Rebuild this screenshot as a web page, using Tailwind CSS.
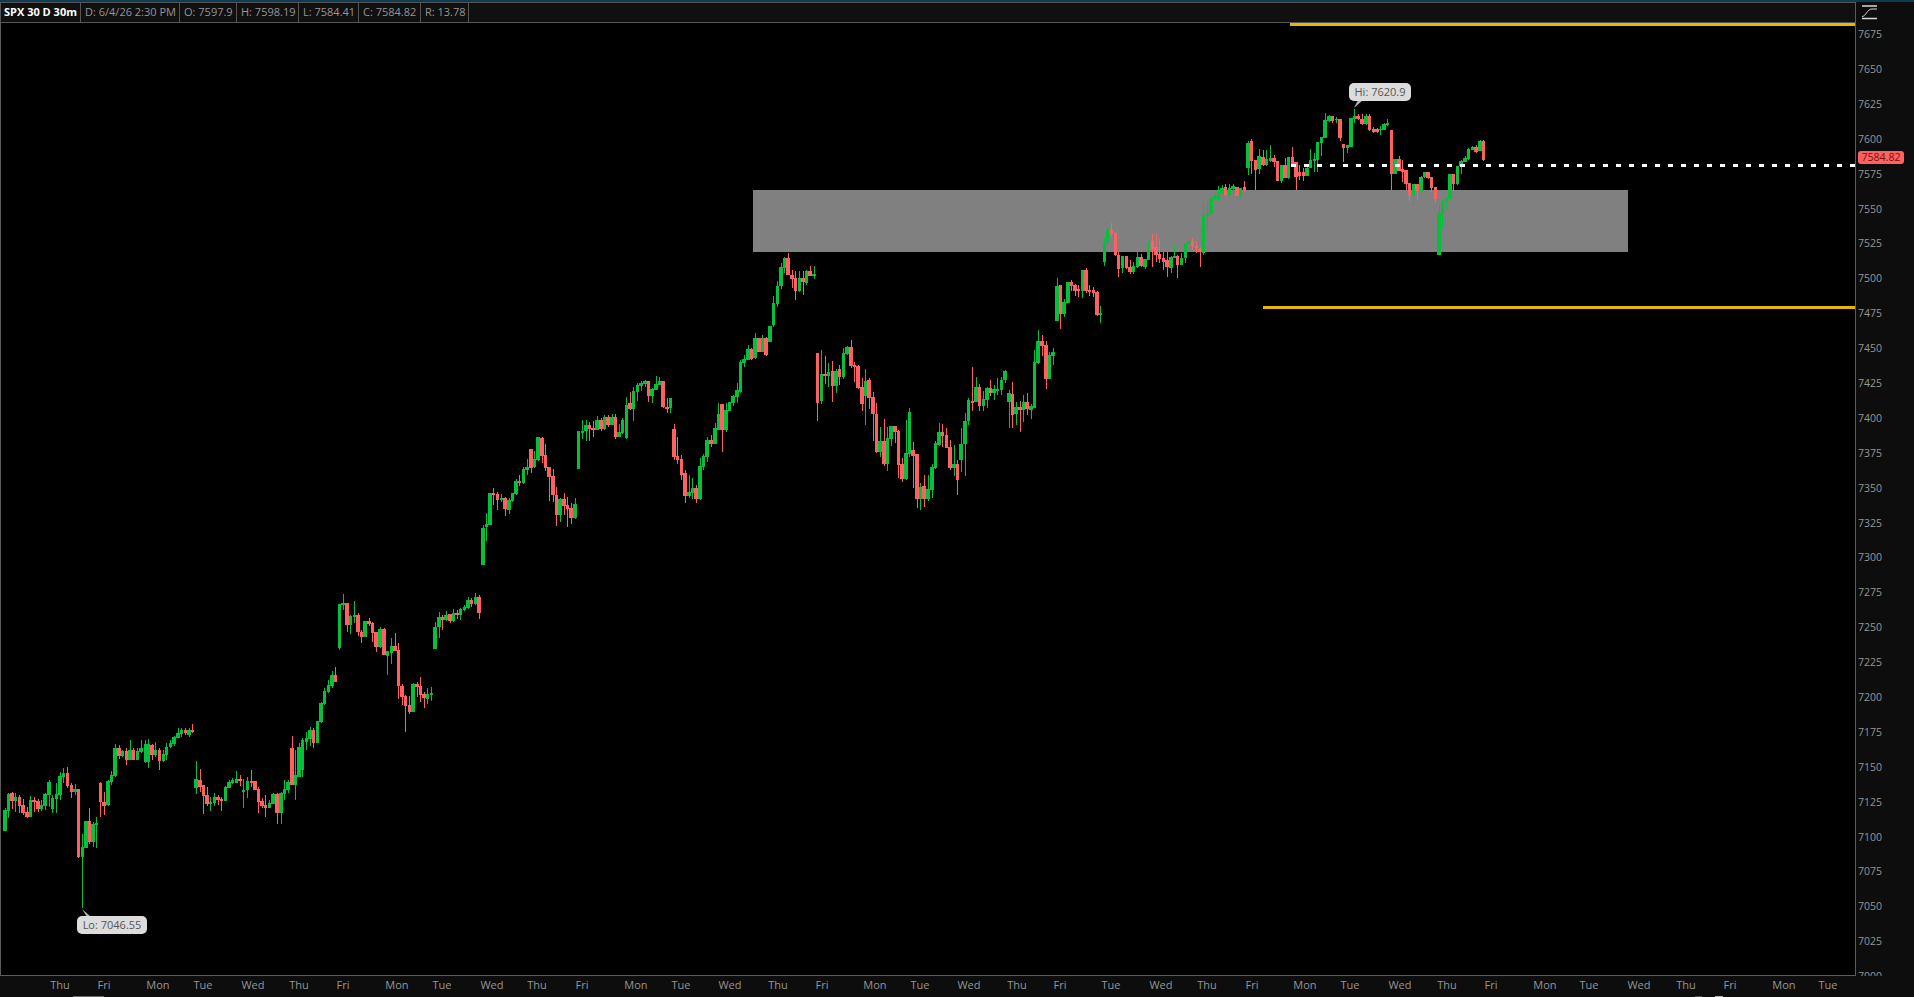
<!DOCTYPE html>
<html lang="en">
<head>
    <meta charset="UTF-8">
    <title>SPX 30 D 30m</title>
    <script src="https://cdn.jsdelivr.net/npm/@tailwindcss/browser@4"></script>
</head>
<body class="bg-black overflow-hidden">
    <div class="w-[1914px] h-[997px] flex flex-col font-['Open_Sans',sans-serif] text-[10.5px] text-[#969696] relative">
        <!-- top stripe -->
        <div class="h-[2px] bg-[#0e3a52]"></div>

        <div class="h-[974px] flex">
            <!-- left: header + chart -->
            <div class="w-[1855px] flex flex-col">
                <div class="h-[21px] flex items-center bg-[#101010] border-t border-b border-[#555555] border-l text-[11px]">
                    <div class="w-[80px] h-full flex items-center pl-[3px] border-r border-[#555555] text-white font-bold">SPX 30 D 30m</div>
                    <div class="w-[99px] h-full flex items-center pl-[4px] border-r border-[#555555]">D: 6/4/26 2:30 PM</div>
                    <div class="w-[57px] h-full flex items-center pl-[4px] border-r border-[#555555]">O: 7597.9</div>
                    <div class="w-[62px] h-full flex items-center pl-[4px] border-r border-[#555555]">H: 7598.19</div>
                    <div class="w-[60px] h-full flex items-center pl-[4px] border-r border-[#555555]">L: 7584.41</div>
                    <div class="w-[62px] h-full flex items-center pl-[4px] border-r border-[#555555]">C: 7584.82</div>
                    <div class="w-[48px] h-full flex items-center pl-[4px] border-r border-[#555555]">R: 13.78</div>
                </div>

                <!-- chart -->
                <div class="h-[953px] relative border-l border-b border-[#5a5a5a] bg-black">
                    <svg id="chart" class="block w-[1854px] h-[952px]" viewBox="1 23 1854 952" shape-rendering="crispEdges">
                        <rect x="753" y="190" width="875" height="62" fill="#808080"></rect>
                        <rect x="1290" y="23" width="565" height="3" fill="#e6b800"></rect>
                        <rect x="1263" y="306" width="592" height="3" fill="#e6b800"></rect>
                        <g id="candles"></g>
                        <line x1="1291" y1="165.5" x2="1855" y2="165.5" stroke="#ffffff" stroke-width="3" stroke-dasharray="5 8"></line>
                        <polygon points="82,909 87,917 90,916" fill="#b5b5b5" shape-rendering="auto"></polygon>
                        <polygon points="1354,108 1358,100 1363,100" fill="#b5b5b5" shape-rendering="auto"></polygon>
                    </svg>
                    <div class="absolute left-[76px] top-[893px] w-[70px] h-[18px] rounded-[5px] bg-[#dcdcdc] text-[#555555] text-[11px] flex items-center justify-center">Lo: 7046.55</div>
                    <div class="absolute left-[1348px] top-[60px] w-[62px] h-[18px] rounded-[5px] bg-[#dcdcdc] text-[#555555] text-[11px] flex items-center justify-center">Hi: 7620.9</div>
                </div>
            </div>

            <!-- price axis -->
            <div class="w-[59px] relative overflow-hidden bg-[#0d0d0d] border-l border-[#5a5a5a] pt-[15.5px] pl-[2px]">
                <div class="h-[34.9px] flex items-center">7675</div>
                <div class="h-[34.9px] flex items-center">7650</div>
                <div class="h-[34.9px] flex items-center">7625</div>
                <div class="h-[34.9px] flex items-center">7600</div>
                <div class="h-[34.9px] flex items-center">7575</div>
                <div class="h-[34.9px] flex items-center">7550</div>
                <div class="h-[34.9px] flex items-center">7525</div>
                <div class="h-[34.9px] flex items-center">7500</div>
                <div class="h-[34.9px] flex items-center">7475</div>
                <div class="h-[34.9px] flex items-center">7450</div>
                <div class="h-[34.9px] flex items-center">7425</div>
                <div class="h-[34.9px] flex items-center">7400</div>
                <div class="h-[34.9px] flex items-center">7375</div>
                <div class="h-[34.9px] flex items-center">7350</div>
                <div class="h-[34.9px] flex items-center">7325</div>
                <div class="h-[34.9px] flex items-center">7300</div>
                <div class="h-[34.9px] flex items-center">7275</div>
                <div class="h-[34.9px] flex items-center">7250</div>
                <div class="h-[34.9px] flex items-center">7225</div>
                <div class="h-[34.9px] flex items-center">7200</div>
                <div class="h-[34.9px] flex items-center">7175</div>
                <div class="h-[34.9px] flex items-center">7150</div>
                <div class="h-[34.9px] flex items-center">7125</div>
                <div class="h-[34.9px] flex items-center">7100</div>
                <div class="h-[34.9px] flex items-center">7075</div>
                <div class="h-[34.9px] flex items-center">7050</div>
                <div class="h-[34.9px] flex items-center">7025</div>
                <div class="h-[34.9px] flex items-center">7000</div>

                <!-- scale icon -->
                <svg class="absolute left-[5px] top-[2px]" width="17" height="17" viewBox="0 0 17 17" fill="none" stroke="#d8d8d8">
                    <path d="M1 2h15M1 14.5h15" stroke-width="1.6"></path>
                    <path d="M1 12.5C5 12.5 6 5 11 5h5" stroke-width="1"></path>
                </svg>
                <!-- last price tag -->
                <div class="absolute left-[2px] top-[149px] w-[46px] h-[13px] rounded-[3px] bg-[#ff6060] text-[#6f1414] flex items-center justify-center">7584.82</div>
            </div>
        </div>

        <!-- time axis -->
        <div class="flex-1 flex items-center bg-[#0d0d0d] text-[11px] pb-[3px]">
            <div class="w-10 text-center ml-[40px]">Thu</div>
            <div class="w-10 text-center ml-[4px]">Fri</div>
            <div class="w-10 text-center ml-[14px]">Mon</div>
            <div class="w-10 text-center ml-[5px]">Tue</div>
            <div class="w-10 text-center ml-[10px]">Wed</div>
            <div class="w-10 text-center ml-[6px]">Thu</div>
            <div class="w-10 text-center ml-[4px]">Fri</div>
            <div class="w-10 text-center ml-[14px]">Mon</div>
            <div class="w-10 text-center ml-[5px]">Tue</div>
            <div class="w-10 text-center ml-[10px]">Wed</div>
            <div class="w-10 text-center ml-[5px]">Thu</div>
            <div class="w-10 text-center ml-[5px]">Fri</div>
            <div class="w-10 text-center ml-[14px]">Mon</div>
            <div class="w-10 text-center ml-[5px]">Tue</div>
            <div class="w-10 text-center ml-[9px]">Wed</div>
            <div class="w-10 text-center ml-[8px]">Thu</div>
            <div class="w-10 text-center ml-[4px]">Fri</div>
            <div class="w-10 text-center ml-[13px]">Mon</div>
            <div class="w-10 text-center ml-[5px]">Tue</div>
            <div class="w-10 text-center ml-[9px]">Wed</div>
            <div class="w-10 text-center ml-[8px]">Thu</div>
            <div class="w-10 text-center ml-[3px]">Fri</div>
            <div class="w-10 text-center ml-[11px]">Tue</div>
            <div class="w-10 text-center ml-[10px]">Wed</div>
            <div class="w-10 text-center ml-[6px]">Thu</div>
            <div class="w-10 text-center ml-[5px]">Fri</div>
            <div class="w-10 text-center ml-[13px]">Mon</div>
            <div class="w-10 text-center ml-[5px]">Tue</div>
            <div class="w-10 text-center ml-[10px]">Wed</div>
            <div class="w-10 text-center ml-[7px]">Thu</div>
            <div class="w-10 text-center ml-[4px]">Fri</div>
            <div class="w-10 text-center ml-[14px]">Mon</div>
            <div class="w-10 text-center ml-[4px]">Tue</div>
            <div class="w-10 text-center ml-[10px]">Wed</div>
            <div class="w-10 text-center ml-[7px]">Thu</div>
            <div class="w-10 text-center ml-[4px]">Fri</div>
            <div class="w-10 text-center ml-[14px]">Mon</div>
            <div class="w-10 text-center ml-[4px]">Tue</div>
        </div>

        <!-- bits of the window below, cut off at the bottom edge -->
        <div class="absolute left-[73px] bottom-0 w-[31px] h-[1px] bg-[#6a6a6a]"></div>
        <div class="absolute left-[1695px] bottom-0 w-[7px] h-[1px] bg-[#555555]"></div>
        <div class="absolute left-[1715px] bottom-0 w-[8px] h-[1px] bg-[#bbbbbb]"></div>
    </div>

    <script>
        // candles traced from crops: [offsetX, offsetY, rows of "colour x top bottom wickTop wickBottom"], crop scale 3x
        const groups = [
            [0, 700, `g 15 330 392 325 392
g 25 282 332 280 355
r 36 279 303 276 328
g 47 291 303 280 335
r 58 291 318 285 340
r 69 316 340 296 345
r 81 336 351 320 353
g 91 300 351 287 351
r 102 300 305 290 335
r 114 304 327 297 337
g 125 316 327 300 332
g 135 282 317 280 330
g 147 245 285 240 320
g 158 295 328 285 340
g 169 283 296 250 338
g 180 228 285 215 300
g 191 219 230 205 250
r 203 219 258 202 265
r 214 255 276 250 293
g 225 267 276 252 285
r 236 267 471 267 473
g 247 441 471 402 625
g 258 363 444 363 444
r 268 363 426 325 432
g 279 372 426 365 440
g 290 370 374 350 443
r 302 249 306 246 350
r 312 306 318 276 345
g 324 243 315 240 318
g 335 225 245 212 255
g 345 144 228 132 232
r 357 144 168 135 178
g 367 153 168 150 170
r 379 152 180 145 195
g 390 151 180 120 180
r 401 151 180 145 180
g 412 153 180 145 180
g 423 144 155 120 158
g 437 132 186 120 190
g 446 132 186 118 205
r 456 135 165 132 180
g 467 150 165 125 170
r 478 150 183 145 210
g 490 162 183 150 185
g 500 141 165 130 180
g 511 129 141 120 145
g 522 111 132 108 138
g 534 99 114 85 115
g 545 90 102 85 110
r 556 90 100 85 105
g 567 90 105 85 110
r 578 90 95 72 100
g 588 237 264 183 282
r 600 240 262 207 275
r 611 255 288 255 342
r 621 285 312 262 317
g 632 306 312 290 332
g 643 292 310 280 318
r 654 291 300 285 315
r 665 296 302 290 332
g 676 261 303 258 303
g 687 246 264 240 265
g 698 240 250 235 252
g 709 237 248 213 250
r 720 237 243 225 258
g 731 270 276 237 324
g 742 243 270 232 295
r 754 243 250 210 262
r 765 243 270 243 270
r 776 267 306 260 340
r 786 303 318 295 325
r 797 315 323 285 350
g 809 309 323 300 325
g 819 282 312 278 312
r 831 282 339 280 372
g 843 279 339 275 372
g 854 267 282 240 300
g 864 246 270 240 280
r 876 144 255 108 255
g 887 225 255 150 300`],
            [280, 570, `g 57 531 621 520 621
g 68 510 600 503 620
g 79 505 515 487 540
g 90 480 507 472 528
r 101 480 519 475 534
g 112 454 519 454 519
g 123 400 456 395 458
g 134 363 402 354 405
g 145 345 366 330 369
g 156 315 348 303 354
r 167 315 336 291 336
g 178 102 234 102 240
g 189 99 105 72 120
r 201 99 165 99 186
g 211 138 165 135 192
g 223 135 141 93 160
r 234 135 186 129 198
r 244 186 201 180 219
g 255 153 201 153 201
r 267 153 162 144 168
r 278 159 189 156 216
r 288 186 231 186 246
g 300 177 231 171 234
r 312 177 255 174 255
g 322 243 258 243 315
g 334 228 249 204 282
r 345 228 243 189 243
r 356 240 348 219 387
r 366 348 381 342 405
r 377 378 408 375 486
r 388 405 426 378 432
g 399 342 426 339 426
r 411 342 351 336 381
r 421 348 375 321 396
r 432 372 384 366 414
g 443 372 387 354 402
g 454 369 375 351 393
g 465 171 237 156 237
g 477 141 171 126 204
r 487 141 150 135 180
g 498 135 150 123 153
r 510 132 153 132 159
g 520 129 153 117 156
r 531 129 135 120 147
g 542 117 135 115 150
g 553 111 120 105 123
g 564 90 114 81 117
r 575 90 102 84 111
g 587 81 102 69 105
r 597 81 129 75 147`],
            [470, 360, `g 39 504 615 495 615
g 50 492 501 459 543
g 60 399 495 399 495
r 71 399 405 384 435
r 83 402 420 396 450
g 94 414 420 402 426
r 105 414 447 411 468
g 117 420 450 414 462
g 128 399 423 399 426
g 138 363 402 357 405
r 149 363 369 345 378
g 160 327 369 321 372
g 171 321 330 297 345
r 183 267 324 267 339
g 193 297 321 273 324
g 204 231 300 231 303
r 216 234 288 231 309
r 226 285 324 252 333
r 237 321 351 321 423
r 249 348 405 327 426
r 259 405 465 381 498
g 270 417 465 414 486
r 282 417 438 399 465
r 292 435 447 411 501
r 303 444 474 429 492
g 315 432 474 414 477
g 326 213 327 213 327
g 337 213 219 180 237
g 348 195 213 180 243
r 358 195 207 186 243
r 369 204 210 183 231
g 381 180 210 168 210
r 393 180 207 174 213
g 404 171 207 165 210
r 414 171 195 165 201
g 426 171 195 162 195
r 437 171 231 162 237
g 447 216 231 192 231
g 458 180 219 174 222
g 470 135 234 111 237
r 480 129 147 96 150
g 491 94 147 81 183
g 502 75 96 69 123
g 513 69 78 63 93
g 525 63 72 60 81
r 536 63 108 63 126
g 546 87 108 84 129
g 558 72 90 48 90
g 569 63 75 51 75
r 579 63 141 63 144
r 591 141 147 114 159
g 602 114 144 114 159`],
            [620, 240, `r 162 567 651 552 660
r 173 648 660 591 672
r 185 657 705 645 720
r 195 699 768 690 789
g 207 756 768 705 774
g 218 744 759 714 777
r 228 744 777 735 789
g 240 678 777 654 780
g 250 648 681 642 690
g 261 600 651 591 666
r 273 600 612 585 621
g 285 564 612 549 612
g 296 522 570 489 570
r 306 492 570 492 636
g 318 510 570 489 576
g 328 486 513 489 513
g 339 468 489 465 498
g 351 450 471 429 489
g 361 366 456 360 459
g 372 357 369 345 381
g 384 327 360 315 360
r 394 327 357 324 360
g 405 294 354 279 357
r 417 294 336 294 336
g 428 294 336 285 336
r 438 294 345 291 348
g 450 258 306 258 306
g 461 189 255 168 261
g 472 138 192 123 201
g 483 81 138 69 147
g 494 54 84 51 99
r 504 54 105 39 105
r 516 105 117 90 144
r 527 114 153 93 180
g 538 114 153 93 156
r 549 114 126 93 165
g 560 93 129 90 135
r 570 93 108 78 108
g 582 102 108 78 117`],
            [800, 330, `r 53 69 219 69 273
g 64 132 213 60 222
r 75 132 138 78 162
g 86 126 138 99 171
r 97 123 168 93 216
g 108 123 168 117 189
r 119 117 141 105 165
g 130 69 141 54 147
g 141 51 72 48 75
r 153 51 108 30 114
r 164 105 111 96 156
r 174 108 174 105 177
r 186 171 222 144 243
g 197 153 198 117 285
r 207 150 204 144 237
r 219 201 252 186 333
r 229 252 366 219 369
g 240 333 366 291 381
r 252 333 402 267 408
g 262 324 402 291 423
g 273 288 327 288 348
r 285 288 306 288 339
r 295 303 405 300 444
r 306 402 447 384 456
g 318 369 447 270 450
g 328 246 372 234 381
r 339 360 378 336 474
r 351 372 507 372 534
g 362 471 507 459 540
r 372 468 507 435 531
g 384 477 507 435 513
g 396 411 480 402 504
g 406 339 414 333 417
g 417 306 345 279 348
r 428 306 318 282 351
r 439 315 354 294 354
r 450 351 414 330 420
g 462 402 414 345 438
r 472 402 450 390 495
g 483 342 390 294 426
g 495 273 342 249 438
g 506 210 273 204 285
r 517 213 219 111 243
g 528 171 216 141 216
r 539 171 228 162 243
g 550 207 228 183 243
g 561 174 210 171 234
r 571 174 189 150 198
g 582 177 189 165 210
g 593 177 183 144 195
g 604 150 180 141 195
g 615 123 150 120 159
g 627 189 216 180 294
r 638 192 255 156 294
g 648 231 252 216 285
r 660 231 240 213 306
g 671 216 240 195 276
r 681 216 237 189 255
g 693 228 240 222 267
g 704 96 234 60 234
g 714 33 99 0 102
r 726 33 48 15 78
r 738 45 147 33 177
g 749 75 147 66 147
g 759 66 78 54 105`],
            [1040, 200, `g 51 258 363 234 363
r 62 255 342 255 387
g 72 306 342 297 351
g 84 246 309 246 309
r 95 246 258 240 273
r 105 255 273 252 288
r 116 267 273 255 291
g 128 210 273 210 294
r 138 210 273 204 279
r 149 270 276 255 288
r 160 270 279 261 291
r 171 276 345 273 348
g 182 339 345 318 369`],
            [1100, 170, `g 13 219 276 204 288
g 23 180 216 168 225
r 35 180 192 159 201
r 46 189 255 186 258
r 56 255 297 246 321
g 68 258 294 258 309
r 79 258 294 258 297
r 90 291 306 270 312
g 101 288 306 276 312
g 112 261 291 246 294
r 123 261 288 252 291
g 135 267 291 267 297
g 146 240 270 213 270
r 157 213 237 192 291
r 168 231 255 192 276
r 179 252 267 207 279
r 190 264 276 246 300
r 201 270 291 246 321
g 213 261 294 258 309
g 223 259 264 228 264
r 233 258 285 255 324
g 245 264 285 249 285
g 256 219 264 219 279
g 267 213 222 213 222
r 278 213 228 204 240
r 289 228 234 213 249
r 300 237 245 231 291
g 311 135 249 93 255
g 322 132 137 95 180
g 333 84 132 81 132
g 345 78 87 69 90
g 355 66 90 48 96
g 366 54 69 45 72
r 377 51 75 42 78
g 388 54 75 42 78
g 399 48 57 42 60
r 411 51 78 51 78
g 422 54 78 54 81
r 433 51 60 33 66`],
            [1220, 70, `g 84 219 294 213 315
r 95 213 273 208 312
r 106 270 300 270 360
g 117 258 297 237 312
r 129 261 285 240 288
g 140 267 285 240 288
g 151 264 273 225 276
r 162 264 276 255 290
r 173 273 333 273 333
g 184 285 333 285 339
r 195 285 324 264 324
g 206 261 324 261 327
r 217 261 288 232 290
r 228 276 321 276 360
r 239 306 318 285 330
r 250 306 318 293 333
g 261 294 318 285 318
g 272 270 294 237 294
g 283 267 273 250 305
g 293 216 270 216 306
g 304 201 219 201 258
g 315 150 204 129 204
g 327 138 153 135 156
r 337 138 153 138 159
g 349 146 151 140 158
r 360 147 204 147 213
r 371 222 234 222 276
g 382 225 234 225 249
g 393 144 231 144 231
g 404 138 147 116 160
r 414 138 147 132 150
r 426 147 162 132 165
g 438 138 162 132 165
r 449 138 180 132 183
r 460 177 186 171 189
r 471 177 186 174 189
g 481 177 181 168 195
g 492 162 180 160 180
g 503 159 165 147 168
r 514 180 312 180 360
g 525 267 312 267 312
r 537 267 303 258 303
r 547 297 306 270 336
r 558 300 342 300 360
r 569 339 378 339 392
g 580 342 378 342 408
r 591 342 363 342 390
g 603 321 363 318 381
g 613 306 321 306 324
r 624 306 324 306 327
r 635 321 354 321 366
r 646 351 387 351 399
g 657 430 555 405 555
g 668 393 432 390 474
g 679 384 396 384 420
g 690 312 387 312 387
r 701 312 342 312 360
g 713 288 342 288 345
g 723 273 288 270 312
g 735 264 276 258 276
g 746 237 267 234 270
g 757 231 240 228 240
r 768 231 246 225 249
g 780 213 243 210 243
r 790 213 270 210 273`]
        ];

        const colours = { g: '#04c03a', r: '#ff6060' };
        const layer = document.getElementById('candles');

        function addRect(x, y, w, h, fill) {
            const el = document.createElementNS('http://www.w3.org/2000/svg', 'rect');
            el.setAttribute('x', x);
            el.setAttribute('y', y);
            el.setAttribute('width', w);
            el.setAttribute('height', Math.max(h, 1));
            el.setAttribute('fill', fill);
            layer.appendChild(el);
        }

        groups.forEach(([ox, oy, rows]) => {
            rows.split('\n').forEach(row => {
                const parts = row.trim().split(' ');
                const [x, top, bottom, wickTop, wickBottom] = parts.slice(1).map(Number);
                const cx = ox + x / 3;
                const fill = colours[parts[0]];
                addRect(Math.floor(cx), oy + wickTop / 3, 1, (wickBottom - wickTop) / 3, fill);
                const left = Math.round(cx - 1.8);
                addRect(left, oy + top / 3, Math.round(cx + 1.8) - left, (bottom - top) / 3, fill);
            });
        });
    </script>
</body>
</html>
